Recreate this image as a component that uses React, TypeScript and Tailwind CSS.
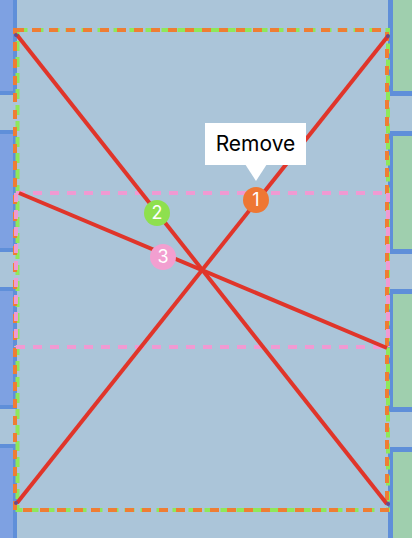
import React from "react";

const boxes = [0, 1, 2, 3];

function Marker({ n, cls, x, y }: { n: string; cls: string; x: number; y: number }) {
  return (
    <div
      className={`absolute w-[26px] h-[26px] rounded-full flex items-center justify-center text-white text-[18px] leading-none ${cls}`}
      style={{ left: x - 13, top: y - 13, fontFamily: "Inter, 'Liberation Sans', sans-serif" }}
    >
      {n}
    </div>
  );
}

export default function App() {
  return (
    <div className="relative w-[412px] h-[538px] overflow-hidden bg-[#abc5d9]">
      <div className="flex justify-between h-full">
        <div className="flex flex-col gap-[35px] mt-[-27px] w-[17px]">
          {boxes.map((i) => (
            <div key={i} className="h-[122px] w-[21px] ml-[-4px] shrink-0 bg-[#7ea1e2] border-4 border-[#5f8fd9]" />
          ))}
        </div>
        <div className="flex flex-col gap-[35px] mt-[-27px] w-[24px]">
          {boxes.map((i) => (
            <div key={i} className="h-[123px] w-[29px] shrink-0 bg-[#9fcfae] border-[5px] border-[#5f8fd9]" />
          ))}
        </div>
      </div>

      <svg className="absolute inset-0" width="412" height="538" viewBox="0 0 412 538">
        <rect x="17.5" y="30" width="370.5" height="480" fill="none" stroke="#8ee85a" strokeWidth="4" strokeDasharray="10 6" />
        <rect x="15" y="30" width="372" height="480" fill="none" stroke="#ef7d33" strokeWidth="4" strokeDasharray="9 8" />
        <line x1="16" y1="193" x2="388" y2="193" stroke="#f09ad2" strokeWidth="4" strokeDasharray="9 8" />
        <line x1="16" y1="347" x2="388" y2="347" stroke="#f09ad2" strokeWidth="4" strokeDasharray="9 8" />
        <line x1="16" y1="193" x2="16" y2="347" stroke="#f09ad2" strokeWidth="4" strokeDasharray="9 8" />
        <line x1="388" y1="193" x2="388" y2="347" stroke="#f09ad2" strokeWidth="4" strokeDasharray="9 8" />
        <line x1="17" y1="35" x2="387" y2="504" stroke="#e0352a" strokeWidth="4" />
        <line x1="17" y1="503" x2="388" y2="36" stroke="#e0352a" strokeWidth="4" />
        <line x1="19" y1="193" x2="387" y2="348" stroke="#e0352a" strokeWidth="4" />
        <circle cx="16" cy="35" r="2" fill="#6a4a8a" />
        <circle cx="388" cy="36" r="2" fill="#6a4a8a" />
        <circle cx="16" cy="503" r="2" fill="#6a4a8a" />
        <circle cx="388" cy="504" r="2" fill="#6a4a8a" />
        <polygon points="245,164 267,164 256,181" fill="#ffffff" />
      </svg>

      <Marker n="1" cls="bg-[#ee7733]" x={256} y={200} />
      <Marker n="2" cls="bg-[#8ee04e]" x={157} y={213} />
      <Marker n="3" cls="bg-[#f29fd0]" x={163} y={257} />

      <div
        className="absolute left-[205px] top-[123px] w-[101px] h-[42px] bg-white flex items-center justify-center text-[21px] text-black"
        style={{ fontFamily: "Inter, 'Liberation Sans', sans-serif" }}
      >
        Remove
      </div>
    </div>
  );
}
